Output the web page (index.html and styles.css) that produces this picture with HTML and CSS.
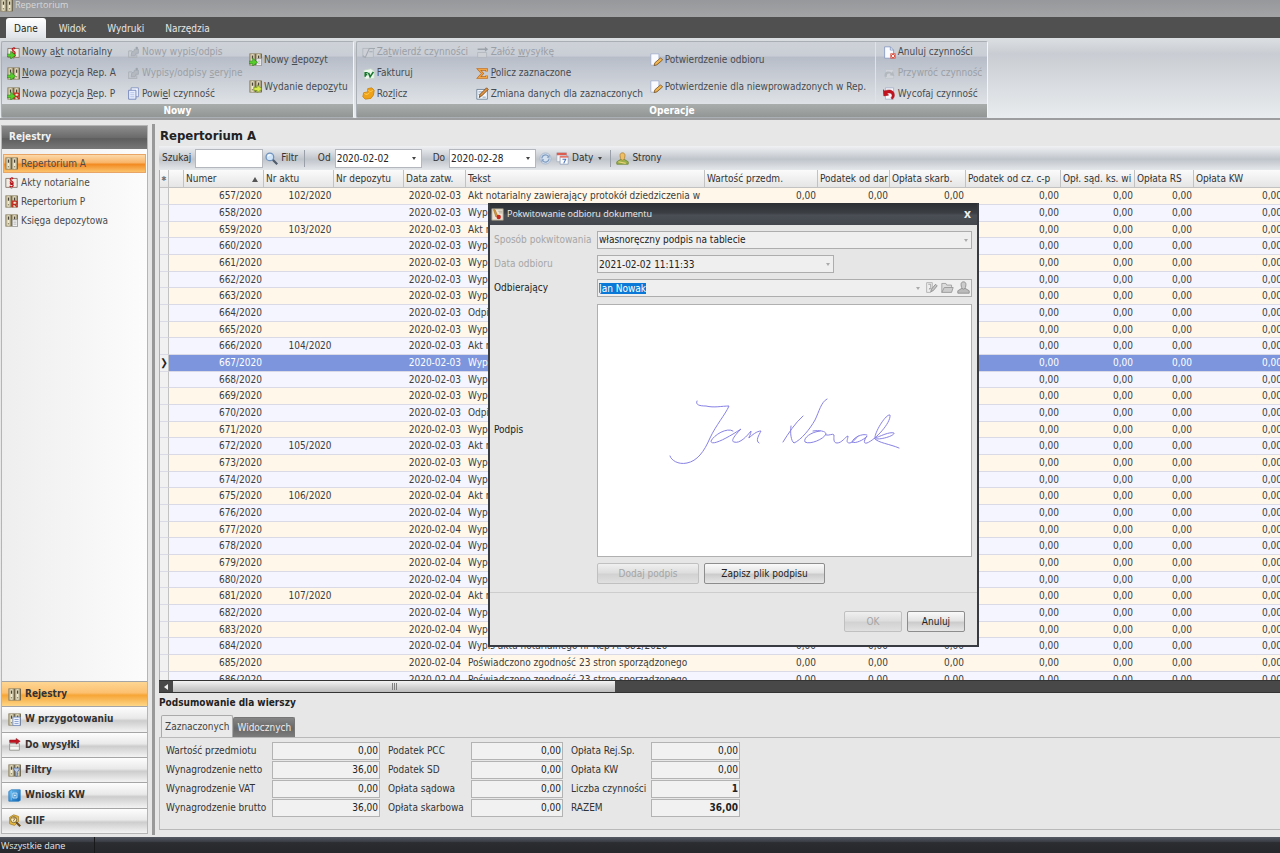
FILE: index.html
```html
<!DOCTYPE html>
<html lang="pl">
<head>
<meta charset="utf-8">
<title>Repertorium</title>
<link rel="stylesheet" href="styles.css">
</head>
<body>
<svg class="sprite" aria-hidden="true">
  <defs>
    <linearGradient id="spine" x1="0" x2="1" y1="0" y2="0"><stop offset="0" stop-color="#b5aa88"/><stop offset=".5" stop-color="#f3edd4"/><stop offset="1" stop-color="#b0a580"/></linearGradient>
    <linearGradient id="blue" x1="0" x2="1" y1="0" y2="1"><stop offset="0" stop-color="#6fc0f2"/><stop offset="1" stop-color="#0c62b4"/></linearGradient>
  </defs>
  <symbol id="binders" viewBox="0 0 16 16">
    <rect x="1" y="1" width="6.500" height="14" fill="url(#spine)" stroke="#8b8163"/><rect x="8.500" y="1" width="6.500" height="14" fill="url(#spine)" stroke="#8b8163"/>
    <path d="M4.300 3v4M11.800 3v4" stroke="#4a4538" stroke-width="1.600"/><path d="M7.900 1v14M15.300 1v14" stroke="#4f4936" stroke-width=".8"/><circle cx="4.300" cy="12" r=".9" fill="#8b8163"/><circle cx="11.800" cy="12" r=".9" fill="#8b8163"/>
  </symbol>
  <symbol id="arrow" viewBox="0 0 16 16"><path d="M0 10h4.500V6.500L10.500 11.500 4.500 16v-3H0z" fill="#55cf28" stroke="#2a8a18" stroke-width=".8"/></symbol>
  <symbol id="book" viewBox="0 0 16 16">
    <path d="M1 3h5l2 1 2-1h5v11h-5l-2 1-2-1H1z" fill="#f1ece4" stroke="#7b6a5d"/><path d="M10 3.500C9 1.500 6 2.500 6.500 4.500 7 6 10 6.500 10 8.500S6.500 11 6.500 9M6.500 6.500C6 9 10 9 10 11.500S6.500 14 6 12" fill="none" stroke="#b5161b" stroke-width="1.600"/>
  </symbol>
  <symbol id="book-new" viewBox="0 0 16 16"><use href="#book"/><use href="#arrow"/></symbol>
  <symbol id="binders-new" viewBox="0 0 16 16"><use href="#binders"/><use href="#arrow"/></symbol>
  <symbol id="binders-p" viewBox="0 0 16 16"><use href="#binders"/><path d="M9.500 15V7.500H13a2 2 0 0 1 0 4H9.500M12 11.500l3 3.500" fill="none" stroke="#c2281e" stroke-width="1.600"/></symbol>
  <symbol id="binders-p-new" viewBox="0 0 16 16"><use href="#binders-p"/><use href="#arrow"/></symbol>
  <symbol id="binders-doc" viewBox="0 0 16 16"><use href="#binders"/><path d="M9 7h6.500v8.500H9z" fill="#f0f0f0" stroke="#999"/><path d="M10.500 10h3.500M10.500 12.500h3.500" stroke="#aaa"/></symbol>
  <symbol id="deposit-new" viewBox="0 0 16 16"><use href="#binders-doc"/><use href="#arrow"/></symbol>
  <symbol id="deposit-out" viewBox="0 0 16 16"><use href="#binders"/><path d="M6 9h4V6l6 5-6 5v-3H6z" fill="#d8e94c" stroke="#75961e"/></symbol>
  <symbol id="ghost-add" viewBox="0 0 16 16"><path d="M2 6h4M2 6v8h10v-4" fill="none" stroke="#b0b5bc" stroke-width="1.400"/><path d="M5 12l1-5 3-1V4h5v5h-3l-1 3z" fill="#b4b9c0" stroke="#a3a9b1"/><circle cx="12" cy="2.500" r="1.500" fill="#9da3ab"/></symbol>
  <symbol id="copy" viewBox="0 0 16 16"><path d="M5 1h9v11H5z" fill="#f4f8ff" stroke="#7889bd"/><path d="M2 4h9v11H2z" fill="#e8effe" stroke="#6478b5"/><path d="M4 7h5M4 9.500h5M4 12h5" stroke="#a9b9e2"/></symbol>
  <symbol id="ghost-check" viewBox="0 0 16 16"><path d="M1 3h13v11H1z" fill="#cdd1d7" stroke="#b0b5bd"/><path d="M1 12l3 2L9 3h7M9 7h4" fill="none" stroke="#a3a9b1" stroke-width="1.300"/></symbol>
  <symbol id="invoice" viewBox="0 0 16 16"><path d="M2 4l9-2 4 3v9l-11 1z" fill="#eef7ee" stroke="#c5d6c5"/><path d="M4 12V7h3M4 9.500h2.500M8 7l2 5 4-6" fill="none" stroke="#19772f" stroke-width="2"/></symbol>
  <symbol id="coins" viewBox="0 0 16 16"><path d="M7 2l5-1 3 3-1 6-3 4-7 1-3-3 1-5 5-1z" fill="#eda21a" stroke="#c9820f"/><path d="M3 8c2 2 5 1 6-1M8 4c1 2 4 2 5 0" fill="none" stroke="#ffcf58" stroke-width="1.200"/></symbol>
  <symbol id="ghost-send" viewBox="0 0 16 16"><path d="M2 3h9V1l4 3-4 3V5H2z" fill="#9ca2aa"/><path d="M2 8h11v6H2z" fill="#ced2d7" stroke="#b0b5bc"/></symbol>
  <symbol id="sigma" viewBox="0 0 16 16"><path d="M13 5.500V3H3.500L8 8l-4.500 5H13v-2.500" fill="none" stroke="#b8671b" stroke-width="3"/><path d="M13 5.500V3H3.500L8 8l-4.500 5H13v-2.500" fill="none" stroke="#f3a544" stroke-width="1.500"/></symbol>
  <symbol id="edit" viewBox="0 0 16 16"><path d="M1 3h13v12H1z" fill="#f3f7fc" stroke="#61778e"/><path d="M3 6h5M3 9h3M8 12.500h4" stroke="#7892b0"/><path d="M4 13l1-4 8-8 2 2-8 8z" fill="#e7963b" stroke="#65411e"/></symbol>
  <symbol id="doc-pencil" viewBox="0 0 16 16"><path d="M1 1h10v10l-3 4H1z" fill="#f8faff" stroke="#a0aecb"/><path d="M5 15.500l1-3.500 7-6 2.500 2.500-7 6z" fill="#f0b54e" stroke="#765023"/></symbol>
  <symbol id="doc-x" viewBox="0 0 16 16"><path d="M2 1h7l4 4v10H2z" fill="#f9fbff" stroke="#8295be"/><path d="M9 1v4h4" fill="none" stroke="#8295be"/><path d="M9 9h6.500v6.500H9z" fill="#d95344"/><path d="M10.500 10.500l3.500 3.500m0-3.500l-3.500 3.500" stroke="#fff" stroke-width="1.200"/></symbol>
  <symbol id="ghost-redo" viewBox="0 0 16 16"><path d="M3 3h10v11H3z" fill="#d0d4da" stroke="#c0c5cb"/><path d="M2 12C1 6 6 4 11 7l1-2 2 6-6-1 1.500-1.500C6 7 4 9 5 12z" fill="#b3b8bf"/></symbol>
  <symbol id="undo" viewBox="0 0 16 16"><path d="M3 1h10v14H3z" fill="#f5f7fc" stroke="#a6afc5"/><path d="M0 3l2 2c6-3 12-1 12 5 0 2-1 4-3 5l-1-2c3-3 0-7-5-5l2 2-6 1z" fill="#c4131f" stroke="#9b0e18" stroke-width=".6"/></symbol>
  <symbol id="lens" viewBox="0 0 16 16"><path d="M9 9l6 6" stroke="#505b6c" stroke-width="2.800"/><circle cx="6" cy="6" r="4.700" fill="#cfe5f9" stroke="#6f92bd" stroke-width="1.600"/><path d="M3.500 5.500c.5-1.500 2-2.200 3.500-1.800" fill="none" stroke="#fff" stroke-width="1.300"/></symbol>
  <symbol id="refresh" viewBox="0 0 16 16"><circle cx="8" cy="8" r="6.800" fill="#d5e1ef" stroke="#a1b2c8"/><path d="M3.500 8a4.500 4.500 0 0 1 8-2.700M12.500 8a4.500 4.500 0 0 1-8 2.700" fill="none" stroke="#7f9cc0" stroke-width="1.500"/><path d="M13 3v4H9.500zM3 13V9h3.500z" fill="#7f9cc0"/></symbol>
  <symbol id="calendar" viewBox="0 0 16 16"><path d="M1 1h12v11H1z" fill="#f4f6fa" stroke="#aab2be"/><path d="M1 1h12v3H1z" fill="#dc5d50"/><path d="M5 5h10v10H5z" fill="#fafcff" stroke="#8fa0bb"/><path d="M5 5h10v2H5z" fill="#e67264"/><path d="M8 9h4l-2.500 5" fill="none" stroke="#4971b8" stroke-width="1.300"/></symbol>
  <symbol id="person" viewBox="0 0 16 16"><path d="M1 15v-3l5-3h4l5 3v3z" fill="#9cb04a" stroke="#6b8436"/><path d="M5 4c0-4 6-4 6 0 0 3-1 6-3 6S5 7 5 4z" fill="#efc063" stroke="#b08337"/><path d="M3 12l9 2" stroke="#e9d27b" stroke-width="1.500"/></symbol>
  <symbol id="prep" viewBox="0 0 16 16"><use href="#binders"/><path d="M6 5h9v10.500H6z" fill="#eef4ff" stroke="#6d87c0"/><path d="M8 8h5M8 10.500h5M8 13h5" stroke="#7793c9"/></symbol>
  <symbol id="send" viewBox="0 0 16 16"><path d="M2 7h12v8H2z" fill="#f6f6f4" stroke="#8a8a86"/><path d="M2 10h12" stroke="#aaa"/><path d="M2 2.500h8V.5l5 3.500-5 3.500v-2H2z" fill="#c31622" stroke="#860b14" stroke-width=".6"/></symbol>
  <symbol id="filter" viewBox="0 0 16 16"><use href="#binders"/><path d="M6 5h9l-3.500 5v5h-2v-5z" fill="#bccbe3" stroke="#5b7197"/></symbol>
  <symbol id="kw" viewBox="0 0 16 16"><path d="M1 3l3-2h11v13l-2 1H1z" fill="url(#blue)" stroke="#2f7fc0"/><path d="M6 5h5v6H6z" fill="none" stroke="#bfe2fa" stroke-width="1.200"/><circle cx="8.500" cy="8" r="1.300" fill="#d4edfc"/><path d="M4 2v12" stroke="#7fcaf5"/></symbol>
  <symbol id="giif" viewBox="0 0 16 16"><path d="M2 4l5-3 6 2v6l-5 5-6-2z" fill="#e8b93f" stroke="#a98430"/><circle cx="7" cy="7" r="3.700" fill="#f9edbf" stroke="#7b6a3b" stroke-width="1.200"/><path d="M10 10l5 5" stroke="#6b4a1a" stroke-width="2.600"/><path d="M6 6c0-2 3-2 2.500 0L7 7.500V9" fill="none" stroke="#7a4c13"/></symbol>
  <symbol id="receipt" viewBox="0 0 16 16"><path d="M1 1h14v14H1z" fill="#ece4d4" stroke="#99917e"/><path d="M3 2h2l3 7-2 2z" fill="#d79b3b" stroke="#8c5a18" stroke-width=".6"/><circle cx="9.500" cy="11" r="2.700" fill="#c8281d"/><path d="M9 4h5M10 6h4" stroke="#aaa18f"/></symbol>
  <symbol id="g-pencil" viewBox="0 0 16 16"><path d="M2 2h7v9l-2 3H2z" fill="#eee" stroke="#aaa"/><path d="M4 4h3v4l-2 2 3-1" fill="none" stroke="#999"/><path d="M7 13l1-3 5-6 2 2-5 6z" fill="#c4c4c4" stroke="#888"/></symbol>
  <symbol id="g-folder" viewBox="0 0 16 16"><path d="M1 14V3h5l1 2h6v3" fill="#ddd" stroke="#999"/><path d="M1 14l3-6h11l-2 6z" fill="#ccc" stroke="#929292"/></symbol>
  <symbol id="g-person" viewBox="0 0 16 16"><path d="M1 15v-3l5-3h4l5 3v3z" fill="#bbb" stroke="#8a8a8a"/><path d="M5 4c0-4 6-4 6 0 0 3-1 6-3 6S5 7 5 4z" fill="#ccc" stroke="#8a8a8a"/></symbol>
</svg>

<header class="titlebar"><svg class="icon"><use href="#binders"/></svg><span>Repertorium</span></header>
<nav class="tabs">
  <button class="tab tab-active">Dane</button><button class="tab">Widok</button><button class="tab">Wydruki</button><button class="tab">Narzędzia</button>
</nav>

<section class="ribbon">
  <div class="group">
    <div class="group-body group-new">
      <div class="stack">
        <button class="cmd"><svg class="icon"><use href="#book-new"/></svg><span>Nowy a<u>k</u>t notarialny</span></button>
        <button class="cmd"><svg class="icon"><use href="#binders-new"/></svg><span><u>N</u>owa pozycja Rep. A</span></button>
        <button class="cmd"><svg class="icon"><use href="#binders-p-new"/></svg><span>Nowa pozycja <u>R</u>ep. P</span></button>
      </div>
      <div class="stack">
        <button class="cmd" disabled><svg class="icon"><use href="#ghost-add"/></svg><span>Nowy wypis/odpis</span></button>
        <button class="cmd" disabled><svg class="icon"><use href="#ghost-add"/></svg><span>Wypisy/odpisy <u>s</u>eryjne</span></button>
        <button class="cmd"><svg class="icon"><use href="#copy"/></svg><span>Powi<u>e</u>l czynność</span></button>
      </div>
      <div class="stack stack-two">
        <button class="cmd"><svg class="icon"><use href="#deposit-new"/></svg><span>Nowy <u>d</u>epozyt</span></button>
        <button class="cmd"><svg class="icon"><use href="#deposit-out"/></svg><span>Wydanie depo<u>z</u>ytu</span></button>
      </div>
    </div>
    <h2 class="group-label">Nowy</h2>
  </div>
  <div class="group">
    <div class="group-body group-ops">
      <div class="stack">
        <button class="cmd" disabled><svg class="icon"><use href="#ghost-check"/></svg><span>Za<u>t</u>wierdź czynności</span></button>
        <button class="cmd"><svg class="icon"><use href="#invoice"/></svg><span>Fakturuj</span></button>
        <button class="cmd"><svg class="icon"><use href="#coins"/></svg><span>Roz<u>l</u>icz</span></button>
      </div>
      <div class="stack">
        <button class="cmd" disabled><svg class="icon"><use href="#ghost-send"/></svg><span>Załóż <u>w</u>ysyłkę</span></button>
        <button class="cmd"><svg class="icon"><use href="#sigma"/></svg><span><u>P</u>olicz zaznaczone</span></button>
        <button class="cmd"><svg class="icon"><use href="#edit"/></svg><span>Zmiana danych dla zaznaczonych</span></button>
      </div>
      <div class="stack stack-two">
        <button class="cmd"><svg class="icon"><use href="#doc-pencil"/></svg><span>Potwierdzenie odbioru</span></button>
        <button class="cmd"><svg class="icon"><use href="#doc-pencil"/></svg><span>Potwierdzenie dla niewprowadzonych w Rep.</span></button>
      </div>
      <div class="stack stack-ruled">
        <button class="cmd"><svg class="icon"><use href="#doc-x"/></svg><span>Anuluj czynności</span></button>
        <button class="cmd" disabled><svg class="icon"><use href="#ghost-redo"/></svg><span>Przywróć czynność</span></button>
        <button class="cmd"><svg class="icon"><use href="#undo"/></svg><span>Wycofaj czynność</span></button>
      </div>
    </div>
    <h2 class="group-label">Operacje</h2>
  </div>
</section>

<div class="workspace">
  <aside class="sidebar">
    <h2 class="side-title">Rejestry</h2>
    <nav class="side-list">
      <a class="side-link side-link-on" href="#rep-a"><svg class="icon"><use href="#binders"/></svg>Repertorium A</a>
      <a class="side-link" href="#akty"><svg class="icon"><use href="#book"/></svg>Akty notarialne</a>
      <a class="side-link" href="#rep-p"><svg class="icon"><use href="#binders-p"/></svg>Repertorium P</a>
      <a class="side-link" href="#depozyt"><svg class="icon"><use href="#binders-doc"/></svg>Księga depozytowa</a>
    </nav>
    <div class="side-nav">
      <button class="side-btn side-btn-on"><svg class="icon"><use href="#binders"/></svg>Rejestry</button>
      <button class="side-btn"><svg class="icon"><use href="#prep"/></svg>W przygotowaniu</button>
      <button class="side-btn"><svg class="icon"><use href="#send"/></svg>Do wysyłki</button>
      <button class="side-btn"><svg class="icon"><use href="#filter"/></svg>Filtry</button>
      <button class="side-btn"><svg class="icon"><use href="#kw"/></svg>Wnioski KW</button>
      <button class="side-btn"><svg class="icon"><use href="#giif"/></svg>GIIF</button>
    </div>
  </aside>
  <div class="splitter"></div>

  <main class="main">
    <h1 class="heading">Repertorium A</h1>
    <div class="toolbar">
      <label for="szukaj">Szukaj</label><input class="box box-search" id="szukaj" type="text">
      <button class="tool"><svg class="icon"><use href="#lens"/></svg>Filtr</button>
      <span class="rule"></span>
      <label class="lead" for="od">Od</label>
      <span class="combo combo-date"><input class="combo-input" id="od" type="text" value="2020-02-02"><i class="caret"></i></span>
      <label class="lead" for="do">Do</label>
      <span class="combo combo-date"><input class="combo-input" id="do" type="text" value="2020-02-28"><i class="caret"></i></span>
      <button class="tool" aria-label="Odśwież"><svg class="icon"><use href="#refresh"/></svg></button>
      <button class="tool"><svg class="icon"><use href="#calendar"/></svg>Daty<i class="caret"></i></button>
      <span class="rule"></span>
      <button class="tool"><svg class="icon"><use href="#person"/></svg>Strony</button>
    </div>

    <div class="grid-wrap">
      <table class="grid">
        <colgroup><col class="c-mark"><col class="c-gap"><col class="c-num"><col class="c-akt"><col class="c-akt"><col class="c-date"><col class="c-text"><col class="c-val"><col class="c-dar"><col class="c-skarb"><col class="c-pcc"><col class="c-sad"><col class="c-rs"><col class="c-kw"></colgroup>
        <thead><tr><th class="star">✱</th><th></th><th class="sorted"><span>Numer</span><i class="sort"></i></th><th>Nr aktu</th><th>Nr depozytu</th><th>Data zatw.</th><th>Tekst</th><th>Wartość przedm.</th><th>Podatek od dar</th><th>Opłata skarb.</th><th>Podatek od cz. c-p</th><th>Opł. sąd. ks. wi</th><th>Opłata RS</th><th>Opłata KW</th></tr></thead>
        <tbody id="rows"></tbody>
      </table>
    </div>
    <div class="scrollbar"><button class="scroll-left" aria-label="W lewo"></button><div class="thumb"><i class="grip"></i></div><div class="track"></div></div>

    <section class="summary">
      <h2 class="summary-title">Podsumowanie dla wierszy</h2>
      <div class="sum-tabs"><button class="sum-tab sum-tab-on">Zaznaczonych</button><button class="sum-tab">Widocznych</button></div>
      <div class="sum-panel">
        <label for="s1">Wartość przedmiotu</label><input class="num" id="s1" value="0,00" readonly>
        <label for="s2">Podatek PCC</label><input class="num" id="s2" value="0,00" readonly>
        <label for="s3">Opłata Rej.Sp.</label><input class="num" id="s3" value="0,00" readonly>
        <label for="s4">Wynagrodzenie netto</label><input class="num" id="s4" value="36,00" readonly>
        <label for="s5">Podatek SD</label><input class="num" id="s5" value="0,00" readonly>
        <label for="s6">Opłata KW</label><input class="num" id="s6" value="0,00" readonly>
        <label for="s7">Wynagrodzenie VAT</label><input class="num" id="s7" value="0,00" readonly>
        <label for="s8">Opłata sądowa</label><input class="num" id="s8" value="0,00" readonly>
        <label for="s9">Liczba czynności</label><input class="num num-strong" id="s9" value="1" readonly>
        <label for="s10">Wynagrodzenie brutto</label><input class="num" id="s10" value="36,00" readonly>
        <label for="s11">Opłata skarbowa</label><input class="num" id="s11" value="0,00" readonly>
        <label for="s12">RAZEM</label><input class="num num-strong" id="s12" value="36,00" readonly>
      </div>
    </section>
  </main>
</div>

<footer class="status"><span class="status-cell">Wszystkie dane</span></footer>

<section class="dialog" role="dialog" aria-labelledby="dlg-title">
  <header class="dlg-head"><svg class="icon"><use href="#receipt"/></svg><span class="dlg-title" id="dlg-title">Pokwitowanie odbioru dokumentu</span><button class="dlg-close" aria-label="Zamknij">x</button></header>
  <div class="dlg-form">
    <label class="dim" for="sposob">Sposób pokwitowania</label>
    <span class="combo combo-gray"><select class="combo-input" id="sposob"><option>własnoręczny podpis na tablecie</option></select><i class="caret"></i></span>
    <label class="dim" for="data">Data odbioru</label>
    <span class="combo combo-gray combo-short"><input class="combo-input" id="data" type="text" value="2021-02-02 11:11:33" readonly><i class="caret"></i></span>
    <label for="odb">Odbierający</label>
    <span class="combo combo-gray"><input class="combo-input" id="odb" type="text" value="Jan Nowak"><i class="caret"></i>
      <button class="mini" aria-label="Edytuj"><svg class="icon"><use href="#g-pencil"/></svg></button><button class="mini" aria-label="Otwórz"><svg class="icon"><use href="#g-folder"/></svg></button><button class="mini" aria-label="Osoba"><svg class="icon"><use href="#g-person"/></svg></button></span>
    <span>Podpis</span>
    <div class="sign-pad">
      <svg class="signature" viewBox="0 0 270 100" role="img" aria-label="Podpis Jan Nowak">
        <path d="M47 20C45 24 50 25 56 25C64 27 72 25 79 25C75 34 66 44 60 57C54 71 47 80 37 82C28 84 21 79 20 75"/>
        <path d="M83 50C77 46 64 54 61 60C61 66 79 56 91 48C86 53 80 60 84 61C90 63 97 55 101 50C101 54 98 57 99 57C102 54 107 50 111 50C109 54 105 60 109 62"/>
        <path d="M133 61C138 53 145 42 153 35M141 45C140 52 141 60 144 62C151 59 160 48 165 39C169 31 171 21 177 18"/>
        <path d="M163 50C169 49 176 50 176 53C174 58 160 64 155 61C153 57 161 51 170 50M176 54C179 55 183 52 184 54C184 57 183 62 187 62C192 62 195 56 198 55C198 58 195 62 200 62C204 61 206 57 208 55"/>
        <path d="M217 54C212 52 203 57 202 61C205 63 214 59 217 55C214 59 213 63 217 62C225 59 241 42 240 34C236 33 226 49 225 56C224 59 238 50 244 52C245 55 227 60 224 57C228 62 240 63 249 67"/>
      </svg>
    </div>
    <div class="dlg-actions"><button class="btn btn-wide" disabled>Dodaj podpis</button><button class="btn btn-wider">Zapisz plik podpisu</button></div>
  </div>
  <footer class="dlg-foot"><button class="btn" disabled>OK</button><button class="btn">Anuluj</button></footer>
</section>
<script src="app.js"></script>
</body>
</html>
```
FILE: styles.css
```css
* { box-sizing: border-box; }
body {
  margin: 0; height: 100vh; display: flex; flex-direction: column; position: relative; overflow: hidden;
  font: 10px/14px "DejaVu Sans Condensed", "Noto Sans", sans-serif; color: #333; background: #e7e7e7;
}
button, input, select { font: inherit; color: inherit; margin: 0; padding: 0; border: 0; background: none; border-radius: 0; }
button { white-space: nowrap; }
h1, h2 { margin: 0; font-size: inherit; }
.sprite { position: absolute; width: 0; height: 0; }
.icon { width: 13px; height: 13px; flex: none; }

.titlebar { height: 17px; flex: none; display: flex; align-items: center; gap: 2px; padding-bottom: 7px; color: #d8d8d8; background: linear-gradient(#96989b, #a3a4a6); font-family: "Open Sans", sans-serif; font-size: 9px; }
.tabs { height: 21px; flex: none; display: flex; align-items: flex-end; padding-left: 6px; background: #505050; }
.tab { height: 20px; padding: 2px 10px 0 11px; color: #e6e6e6; }
.tab-active { margin-right: 2px; padding: 2px 8px 0; border-radius: 3px 3px 0 0; background: linear-gradient(#fff, #dfe3e8); color: #222; }

.ribbon { flex: none; display: flex; gap: 2px; padding: 3px 1px 0; height: 82px; background: linear-gradient(#dcdfe2, #c9cdd3 20%, #e9ecee); border-bottom: 2px solid #9c9d9f; }
.group { display: flex; flex-direction: column; height: 77px; border: 1px solid #aaafb5; border-right-color: #f4f5f6; border-radius: 2px; background: linear-gradient(#ced2d8, #c9cdd5 14px, #b7bdc8 15px, #dfe3e7 63px); }
.group-body { flex: 1; display: grid; padding: 0 5px; }
.group-new { grid-template-columns: 120px 122px auto; }
.group-ops { grid-template-columns: 114px 174px 225px auto; }
.group-label { height: 13px; line-height: 13px; text-align: center; color: #fff; background: linear-gradient(#a9adac, #929695); }
.stack { display: flex; flex-direction: column; }
.stack .cmd { flex: 1; }
.stack-two { justify-content: center; }
.stack-two .cmd { flex: none; height: 27px; }
.stack-ruled { border-left: 1px solid #dfe3e7; padding-left: 7px; }
.cmd { display: flex; align-items: center; gap: 2px; color: #474b50; }
.cmd:disabled { color: #9b9fa6; }

.workspace { flex: 1; min-height: 0; display: flex; padding-bottom: 2px; }
.sidebar { width: 147px; margin: 5px 0 1px 1px; flex: none; display: flex; flex-direction: column; border: 1px solid #b5b5b5; background: #fff; }
.side-title { height: 23px; line-height: 22px; padding-left: 7px; color: #f2f2f2; background: linear-gradient(#8d8d8d, #6b6b6b 50%, #5e5e5e 55%, #787878); }
.side-list { flex: 1; display: flex; flex-direction: column; padding: 5px 1px; background: linear-gradient(90deg, #eeeeee, #fcfcfc); }
.side-link { height: 19px; display: flex; align-items: center; gap: 3px; padding-left: 2px; color: #4b4b4b; text-decoration: none; }
.side-link-on { border: 1px solid #e8a565; padding-left: 1px; background: linear-gradient(#fbd9a9, #f9b468 45%, #f28b22 55%, #fbc26d); }
.side-nav { flex: none; height: 152px; display: flex; flex-direction: column; }
.side-btn { flex: 1; display: flex; align-items: center; gap: 4px; padding-left: 6px; border-top: 1px solid #a5a5a5; font-weight: bold; background: linear-gradient(#fdfdfd, #e9e9e9 45%, #cdcdcd 55%, #f3f3f3); }
.side-btn-on { background: linear-gradient(#fdd692, #fcc070 45%, #f7a536 55%, #fdd687); }
.splitter { width: 3px; margin: 4px 4px 0; flex: none; background: #999; }

.main { flex: 1; min-width: 0; display: flex; flex-direction: column; }
.heading { flex: none; height: 26px; line-height: 31px; padding-left: 1px; font-size: 13px; color: #222; }
.toolbar { flex: none; height: 24px; display: flex; align-items: center; padding-left: 3px; background: linear-gradient(#f0f1f3, #c9cdd3 45%, #bfc4cb 55%, #e5e7ea); }
.box { height: 19px; border: 1px solid #b4b8be; background: #fff; }
.box-search { width: 68px; margin: 0 2px 0 4px; }
.tool { display: flex; align-items: center; gap: 3px; margin-right: 4px; }
.rule { width: 1px; height: 17px; margin: 0 5px 0 2px; background: #9aa0a8; }
.lead { margin: 0 4px 0 8px; }
.combo { display: flex; align-items: center; height: 19px; border: 1px solid #b4b8be; background: #fff; color: #222; padding-right: 3px; }
.combo-date { width: 87px; margin-right: 3px; }
.combo-input { flex: 1; min-width: 0; height: 15px; padding-left: 1px; appearance: none; outline: none; }
.caret { flex: none; margin: 0 2px; border: 2px solid transparent; border-top: 3px solid #444; border-bottom: 0; }

.grid-wrap { flex: 1; min-height: 0; overflow: hidden; border-left: 1px solid #b0b0b0; background: #fff; }
.grid { table-layout: fixed; width: 1124px; border-spacing: 0; }
.c-mark { width: 9px; } .c-gap { width: 15px; } .c-num { width: 80px; } .c-akt { width: 70px; } .c-date { width: 62px; }
.c-text { width: 239px; } .c-val { width: 113px; } .c-dar { width: 72px; } .c-skarb { width: 76px; } .c-pcc { width: 95px; }
.c-sad { width: 74px; } .c-rs { width: 59px; } .c-kw { width: 90px; }
.grid th, .grid td { padding: 0 2px; overflow: hidden; white-space: nowrap; }
.grid th { height: 18px; font-weight: normal; text-align: left; border-right: 1px solid #c2c2c2; border-bottom: 1px solid #c2c2c2; background: linear-gradient(#fbfbfb, #e5e5e5); }
.grid .star { padding: 0; font-size: 7px; text-align: center; color: #777; }
.sort { float: right; margin: 5px 3px 0 0; border: 3px solid transparent; border-bottom: 5px solid #555; border-top: 0; }
.grid td { height: 17px; line-height: 14px; text-align: right; border-bottom: 1px solid #d9dae6; background: #f4f5fe; color: #3c3c3c; }
.grid tr:nth-child(odd) td { background: #fff8ea; }
.grid tr:nth-child(3n) td { height: 16px; }
.grid .mark, .grid tr:nth-child(odd) .mark { padding: 0; text-align: center; border-right: 1px solid #c2c2c2; background: #f1f1f1; color: #222; }
.grid .akt { text-align: center; padding-left: 24px; }
.grid .date { padding-right: 5px; }
.grid .txt { text-align: left; }
.grid .selected td:not(.mark) { background: #7c95dc; color: #fff; }

.scrollbar { flex: none; height: 13px; display: flex; border-top: 1px solid #333; border-bottom: 1px solid #333; background: #484848; }
.scroll-left { width: 14px; display: flex; align-items: center; justify-content: center; }
.scroll-left::before { content: ""; border: 3px solid transparent; border-right: 4px solid #eee; border-left: 0; }
.thumb { flex: 442; display: flex; align-items: center; justify-content: center; background: linear-gradient(#f4f4f4, #d6d6d6 50%, #bcbcbc); }
.grip { width: 5px; height: 7px; background: repeating-linear-gradient(90deg, #808080 0 1px, transparent 1px 2px); }
.track { flex: 665; }

.summary { flex: none; padding-bottom: 5px; }
.summary-title { line-height: 20px; color: #222; }
.sum-tabs { display: flex; align-items: flex-end; height: 24px; padding-left: 2px; }
.sum-tab { height: 20px; padding: 0 3px; border: 1px solid #777; border-bottom: 0; border-radius: 2px 2px 0 0; color: #ededed; background: linear-gradient(#858585, #686868 55%, #7d7d7d); }
.sum-tab-on { height: 22px; border-color: #aaa; color: #444; background: #eaeaea; }
.sum-panel { display: grid; grid-template-columns: 106px 108px 91px 92px 88px 89px; grid-auto-rows: 19px; align-items: center; padding: 3px 6px 12px; border: 1px solid #b9b9b9; border-right: 0; white-space: nowrap; }
.sum-panel label:nth-of-type(3n+2), .sum-panel label:nth-of-type(3n) { padding-left: 8px; }
.num { width: 100%; height: 18px; padding-right: 1px; border: 1px solid #b3b3b3; background: #f1f1f1; text-align: right; color: #222; }
.num-strong { font-weight: bold; }

.status { flex: none; height: 16px; display: flex; color: #e6e6e6; font-family: "Open Sans", sans-serif; font-size: 9px; line-height: 18px; background: linear-gradient(#535861, #393c43 30%, #2b2d31 35%, #25272b); }
.status-cell { width: 95px; padding-left: 1px; border-right: 1px solid #18191b; }

.dialog { position: absolute; left: 488px; top: 203px; width: 491px; border: 2px solid #383b41; border-top: 0; background: #e6e6e6; color: #222; }
.dlg-head { height: 22px; display: flex; align-items: center; gap: 3px; padding: 0 6px 0 1px; color: #eee; font-family: "Open Sans", sans-serif; font-size: 9px; background: linear-gradient(#2c2f33, #3b3e43 45%, #4a4e55 55%, #43464d); }
.dlg-title { flex: 1; }
.dlg-close { font-size: 12px; font-weight: bold; line-height: 16px; }
.dlg-form { display: grid; grid-template-columns: 102px 1fr; align-items: center; gap: 6px 1px; padding: 6px 5px 8px 4px; border-bottom: 1px solid #cdcdcd; white-space: nowrap; }
.dim { color: #a5a5a5; }
.combo-gray { height: 18px; border-color: #adadad; background: #efefef; padding-right: 1px; }
.combo-gray .caret { border-top-color: #aaa; }
.combo-short { width: 237px; }
.mini { margin-left: 3px; height: 14px; }
.combo-input::selection { background: #0a78d7; color: #fff; }
.sign-pad { height: 253px; margin-top: 1px; display: flex; align-items: center; justify-content: center; border: 1px solid #b0b0b0; background: #fff; }
.signature { width: 270px; height: 100px; fill: none; stroke: #8882e4; stroke-width: 1; stroke-linecap: round; stroke-linejoin: round; }
.dlg-actions { grid-column: 2; display: flex; gap: 5px; }
.btn { height: 21px; min-width: 58px; border: 1px solid #8d8d8d; border-radius: 2px; color: #222; background: linear-gradient(#fafafa, #e4e4e4 45%, #cccccc 55%, #e6e6e6); }
.btn:disabled { border-color: #c0c0c0; color: #a5a5a5; background: linear-gradient(#f0f0f0, #dedede 45%, #d2d2d2 55%, #e0e0e0); }
.btn-wide { width: 102px; }
.btn-wider { width: 121px; }
.dlg-foot { display: flex; justify-content: flex-end; gap: 5px; padding: 18px 12px 13px; }
```
FILE: app.js
```js
const deeds = { 657: 102, 659: 103, 666: 104, 672: 105, 675: 106, 681: 107 };
const copies = [664, 670];
const body = document.getElementById("rows");

function description(n) {
  if (n === 657) return "Akt notarialny zawierający protokół dziedziczenia w";
  if (deeds[n]) return "Akt notarialny";
  if (copies.includes(n)) return "Odpis dokumentu";
  if (n > 684) return "Poświadczono zgodność 23 stron sporządzonego";
  return "Wypis aktu notarialnego nr Rep A: 681/2020";
}

for (let n = 657; n <= 686; n++) {
  const tr = body.insertRow();
  if (n === 667) tr.className = "selected";
  const cells = [
    [n === 667 ? "❯" : "", "mark"], ["", ""], [n + "/2020", ""],
    [deeds[n] ? deeds[n] + "/2020" : "", "akt"], ["", ""],
    [n < 674 ? "2020-02-03" : "2020-02-04", "date"], [description(n), "txt"],
  ];
  for (let i = 0; i < 7; i++) cells.push(["0,00", ""]);
  for (const [text, cls] of cells) {
    const td = tr.insertCell();
    td.textContent = text;
    if (cls) td.className = cls;
  }
}

document.getElementById("odb").select();
```
